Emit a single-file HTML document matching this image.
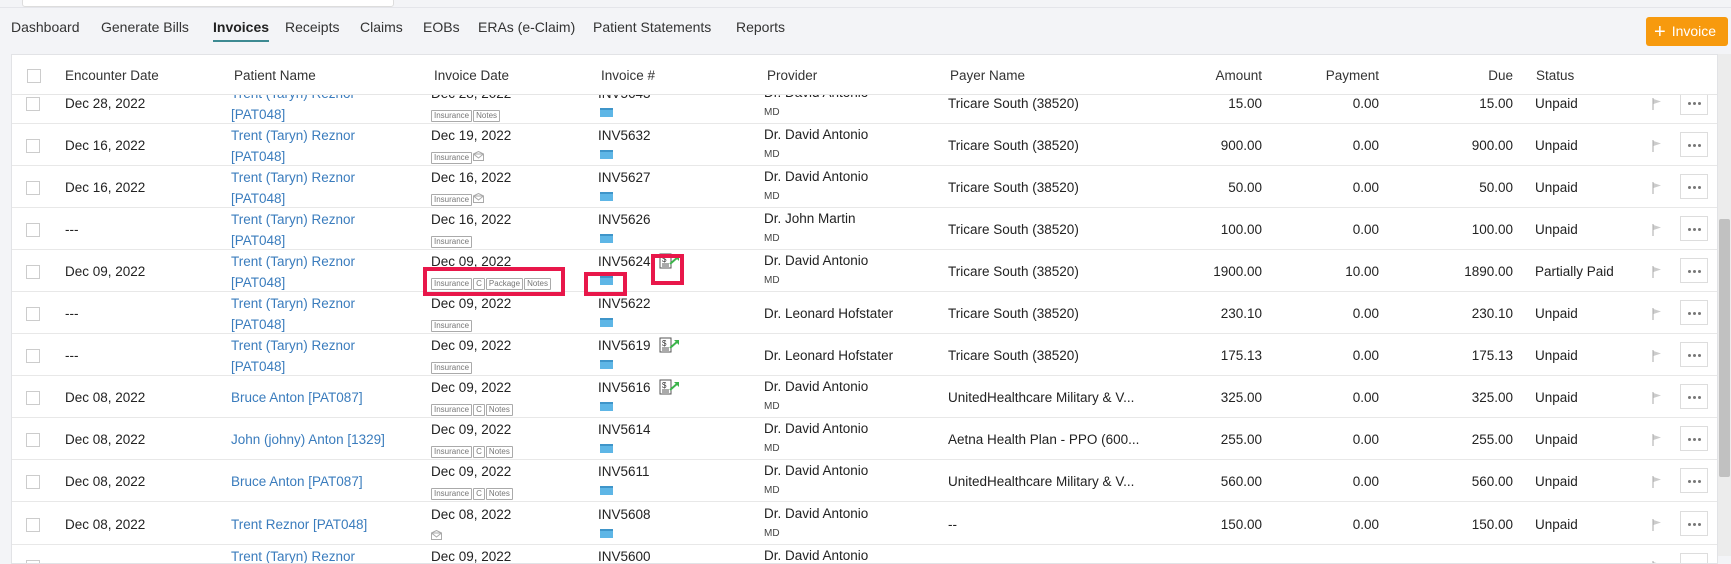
<!DOCTYPE html>
<html><head><meta charset="utf-8">
<style>
*{box-sizing:border-box;margin:0;padding:0}
body{width:1731px;height:556px;overflow:hidden;background:#f3f4f7;font-family:"Liberation Sans",sans-serif;color:#222;position:relative}
.search{position:absolute;left:22px;top:-2px;width:372px;height:9px;background:#fff;border:1px solid #ddd;border-radius:3px}
.topline{position:absolute;left:0;top:7px;width:1731px;height:1px;background:#e4e5ea}
.nav{position:absolute;top:19px;font-size:14px;color:#333}
.nav span{position:absolute;white-space:nowrap}
.act{font-weight:bold;color:#222}
.act:after{content:"";position:absolute;left:0;right:0;top:21px;height:2px;background:#3d8a92}
.btn{position:absolute;left:1646px;top:17px;width:82px;height:29px;background:#f79a0e;border-radius:3px;color:#fff;font-size:14px;line-height:29px;padding-left:8px}
.btn b{font-size:20px;font-weight:normal;margin-right:6px;vertical-align:-2px}
.panel{position:absolute;left:11px;top:54px;width:1707px;height:510px;background:#fff;border:1px solid #e2e3e6;overflow:hidden}
.sb{position:absolute;left:1718px;top:54px;width:13px;height:502px;background:#ececec}
.thumb{position:absolute;left:1719px;top:219px;width:11px;height:258px;background:#c1c1c1;border-radius:2px}
.hdr{position:absolute;left:0;top:0;width:1707px;height:40px;border-bottom:1px solid #e6e6e6;background:#fff;z-index:2;font-size:13.5px;color:#333}
.hdr span,.r span{position:absolute;white-space:nowrap}
.cb{position:absolute;width:14px;height:14px;border:1px solid #ccc;background:#fff}
.r{position:absolute;left:0;width:1707px;height:42.1px;border-bottom:1px solid #e8e8e8;font-size:13.5px}
.lk{color:#3a7cbd}
.tg{display:inline-block;border:1px solid #aaa;border-radius:1px;font-size:8px;color:#777;padding:0 2px;line-height:10px;margin-right:1px}
.card{position:absolute;width:13px;height:9px;background:#5eb6e6;border-top:2px solid #3f95c9}
.md{font-size:10px;color:#444}
.flag{position:absolute;width:10px;height:12px}
.dots{position:absolute;left:1668px;width:28px;height:25px;border:1px solid #ddd;background:#fff}
.dots i{position:absolute;top:11px;width:3px;height:3px;border-radius:50%;background:#777}
.red{position:absolute;border:4px solid #e8174a;z-index:5}
</style></head><body>
<div class="search"></div><div class="topline"></div>
<div class="nav">
<span style="left:11px">Dashboard</span>
<span style="left:101px">Generate Bills</span>
<span class="act" style="left:213px">Invoices</span>
<span style="left:285px">Receipts</span>
<span style="left:360px">Claims</span>
<span style="left:423px">EOBs</span>
<span style="left:478px">ERAs (e-Claim)</span>
<span style="left:593px">Patient Statements</span>
<span style="left:736px">Reports</span>
</div>
<div class="btn"><b>+</b>Invoice</div>
<div class="sb"></div><div class="thumb"></div>
<div class="panel">
<div class="hdr">
<div class="cb" style="left:15px;top:14px"></div>
<span style="left:53px;top:13px">Encounter Date</span>
<span style="left:222px;top:13px">Patient Name</span>
<span style="left:422px;top:13px">Invoice Date</span>
<span style="left:589px;top:13px">Invoice #</span>
<span style="left:755px;top:13px">Provider</span>
<span style="left:938px;top:13px">Payer Name</span>
<span style="right:457px;top:13px">Amount</span>
<span style="right:340px;top:13px">Payment</span>
<span style="right:206px;top:13px">Due</span>
<span style="left:1524px;top:13px">Status</span>
</div>
<div id="rows"></div>
</div>
<div class="red" style="left:423px;top:267px;width:142px;height:29px"></div>
<div class="red" style="left:584px;top:272px;width:43px;height:24px"></div>
<div class="red" style="left:651px;top:254px;width:33px;height:31px"></div>
<script>
var d=[
["Dec 28, 2022","Trent (Taryn) Reznor|[PAT048]","Dec 28, 2022","IN","INV5643",0,"Dr. David Antonio","Tricare South (38520)","15.00","0.00","15.00","Unpaid"],
["Dec 16, 2022","Trent (Taryn) Reznor|[PAT048]","Dec 19, 2022","IM","INV5632",0,"Dr. David Antonio","Tricare South (38520)","900.00","0.00","900.00","Unpaid"],
["Dec 16, 2022","Trent (Taryn) Reznor|[PAT048]","Dec 16, 2022","IM","INV5627",0,"Dr. David Antonio","Tricare South (38520)","50.00","0.00","50.00","Unpaid"],
["---","Trent (Taryn) Reznor|[PAT048]","Dec 16, 2022","I","INV5626",0,"Dr. John Martin","Tricare South (38520)","100.00","0.00","100.00","Unpaid"],
["Dec 09, 2022","Trent (Taryn) Reznor|[PAT048]","Dec 09, 2022","ICPN","INV5624",1,"Dr. David Antonio","Tricare South (38520)","1900.00","10.00","1890.00","Partially Paid"],
["---","Trent (Taryn) Reznor|[PAT048]","Dec 09, 2022","I","INV5622",0,"Dr. Leonard Hofstater|","Tricare South (38520)","230.10","0.00","230.10","Unpaid"],
["---","Trent (Taryn) Reznor|[PAT048]","Dec 09, 2022","I","INV5619",1,"Dr. Leonard Hofstater|","Tricare South (38520)","175.13","0.00","175.13","Unpaid"],
["Dec 08, 2022","Bruce Anton [PAT087]","Dec 09, 2022","ICN","INV5616",1,"Dr. David Antonio","UnitedHealthcare Military &amp; V...","325.00","0.00","325.00","Unpaid"],
["Dec 08, 2022","John (johny) Anton [1329]","Dec 09, 2022","ICN","INV5614",0,"Dr. David Antonio","Aetna Health Plan - PPO (600...","255.00","0.00","255.00","Unpaid"],
["Dec 08, 2022","Bruce Anton [PAT087]","Dec 09, 2022","ICN","INV5611",0,"Dr. David Antonio","UnitedHealthcare Military &amp; V...","560.00","0.00","560.00","Unpaid"],
["Dec 08, 2022","Trent Reznor [PAT048]","Dec 08, 2022","M","INV5608",0,"Dr. David Antonio","--","150.00","0.00","150.00","Unpaid"],
["","Trent (Taryn) Reznor|[PAT048]","Dec 09, 2022","I","INV5600",0,"Dr. David Antonio","","","","",""]
];
var tn={I:"Insurance",C:"C",P:"Package",N:"Notes"};
var env='<svg width="11" height="10" viewBox="0 0 11 10" style="vertical-align:middle"><rect x="0.5" y="3" width="10" height="6.5" fill="#fff" stroke="#aaa"/><path d="M0.5 3 L5.5 0.5 L10.5 3 M0.5 3 L5.5 7 L10.5 3" fill="none" stroke="#aaa"/></svg>';
var ic='<svg width="22" height="16" viewBox="0 0 22 16" style="position:absolute;left:647px;top:-1px"><rect x="1" y="1" width="11" height="14" fill="#fff" stroke="#555"/><text x="3" y="9" font-size="8" font-family="Liberation Sans" fill="#333">$</text><path d="M3 11h7M3 13h7" stroke="#555"/><path d="M11 11 L19 4" stroke="#3cb44b" stroke-width="2"/><path d="M15 3 L20 3 L20 8 Z" fill="#3cb44b"/></svg>';
var h="";
for(var i=0;i<d.length;i++){var r=d[i],t=(81.5-55)+i*42.1;
var p=r[1].split("|");
h+='<div class="r" style="top:'+t+'px">';
h+='<div class="cb" style="left:14px;top:15px"></div>';
h+='<span style="left:53px;top:14px">'+r[0]+'</span>';
if(p.length>1){h+='<span class="lk" style="left:219px;top:4px">'+p[0]+'</span><span class="lk" style="left:219px;top:25px">'+p[1]+'</span>';}
else h+='<span class="lk" style="left:219px;top:14px">'+p[0]+'</span>';
h+='<span style="left:419px;top:4px">'+r[2]+'</span><span style="left:419px;top:24px">';
for(var j=0;j<r[3].length;j++){var c=r[3][j];h+= c=="M"?env:'<span class="tg" style="position:static">'+tn[c]+'</span>';}
h+='</span>';
h+='<span style="left:586px;top:4px">'+r[4]+'</span><div class="card" style="left:588px;top:26px"></div>';
if(r[5])h+='<span style="left:0;top:4px">'+ic+'</span>';
var pv=r[6].split("|");
if(pv.length>1)h+='<span style="left:752px;top:14px">'+pv[0]+'</span>';
else h+='<span style="left:752px;top:3px">'+r[6]+'</span><span class="md" style="left:752px;top:25px">MD</span>';
h+='<span style="left:936px;top:14px">'+r[7]+'</span>';
h+='<span style="right:457px;top:14px">'+r[8]+'</span><span style="right:340px;top:14px">'+r[9]+'</span><span style="right:206px;top:14px">'+r[10]+'</span>';
h+='<span style="left:1523px;top:14px">'+r[11]+'</span>';
h+='<svg class="flag" style="left:1640px;top:16px" viewBox="0 0 10 12"><path d="M1 0v12" stroke="#aaa"/><path d="M1.5 1 L9 3.5 L1.5 6Z" fill="#ccc"/></svg>';
h+='<div class="dots" style="top:8px"><i style="left:7px"></i><i style="left:12px"></i><i style="left:17px"></i></div>';
h+='</div>';}
document.getElementById("rows").innerHTML=h;
</script>
</body></html>
